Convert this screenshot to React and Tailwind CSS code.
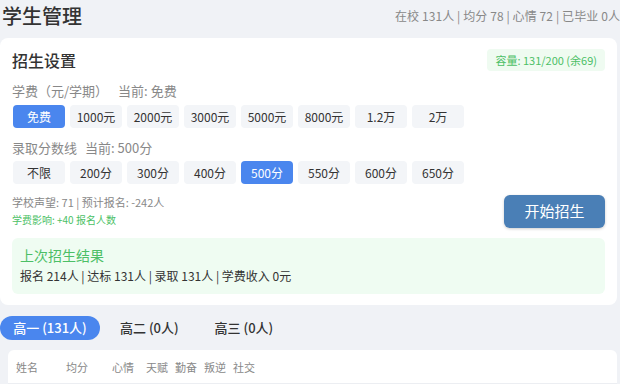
import React from "react";

const fees = ["免费", "1000元", "2000元", "3000元", "5000元", "8000元", "1.2万", "2万"];
const scores = ["不限", "200分", "300分", "400分", "500分", "550分", "600分", "650分"];

function Chip({ label, active }) {
  return (
    <div
      className={
        "w-[52px] h-[23px] flex items-center justify-center rounded-[4px] text-[12px] " +
        (active ? "bg-[#4a86ee] text-white" : "bg-[#f3f5f8] text-[#333]")
      }
    >
      {label}
    </div>
  );
}

export default function App() {
  return (
    <div
      className="w-[620px] h-[384px] overflow-hidden bg-[#f0f2f6] flex flex-col"
      style={{ fontFamily: '"Noto Sans CJK SC", "Noto Sans", sans-serif' }}
    >
      <div className="h-[38px] flex items-start justify-between pt-[2px]">
        <div className="pl-[2px] text-[20px] leading-[28px] font-medium text-[#333]">学生管理</div>
        <div className="whitespace-nowrap pt-[5px] text-[12px] text-[#888] tracking-[0.1px]">
          在校 131人 | 均分 78 | 心情 72 | 已毕业 0人
        </div>
      </div>

      <div className="mr-[3px] bg-white rounded-[8px] h-[267px] px-[12px] pt-[11px] flex flex-col">
        <div className="flex items-center justify-between">
          <div className="text-[16px] leading-[22px] font-medium text-[#333]">招生设置</div>
          <div className="h-[22px] px-[8px] flex items-center rounded-[4px] bg-[#effbf1] text-[11px] text-[#4cbf66]">
            容量: 131/200 (余69)
          </div>
        </div>

        <div className="mt-[11px] text-[13px] leading-[18px] text-[#888]">
          学费（元/学期）<span className="ml-[10px]">当前: 免费</span>
        </div>
        <div className="mt-[5px] flex gap-[5px] pl-[1px]">
          {fees.map((f, i) => (
            <Chip key={f} label={f} active={i === 0} />
          ))}
        </div>

        <div className="mt-[11px] text-[13px] leading-[18px] text-[#888]">
          录取分数线<span className="ml-[8px]">当前: 500分</span>
        </div>
        <div className="mt-[4px] flex gap-[5px] pl-[1px]">
          {scores.map((s) => (
            <Chip key={s} label={s} active={s === "500分"} />
          ))}
        </div>

        <div className="flex items-start justify-between mt-[10px]">
          <div className="flex flex-col">
            <div className="text-[11px] leading-[16px] text-[#888]">学校声望: 71 | 预计报名: -242人</div>
            <div className="mt-[3px] text-[10px] leading-[14px] text-[#4cbf66]">学费影响: +40 报名人数</div>
          </div>
          <div className="mt-[1px] w-[101px] h-[33px] flex items-center justify-center rounded-[6px] bg-[#4a7fb6] text-white text-[15px] shadow-[0_1px_3px_rgba(0,0,0,0.2)]">
            开始招生
          </div>
        </div>

        <div className="mt-[10px] h-[56px] rounded-[6px] bg-[#effcf2] px-[8px] pt-[7px]">
          <div className="text-[14px] leading-[20px] text-[#4cbf66]">上次招生结果</div>
          <div className="mt-[3px] text-[12px] leading-[16px] text-[#333]">
            报名 214人 | 达标 131人 | 录取 131人 | 学费收入 0元
          </div>
        </div>
      </div>

      <div className="mt-[11px] flex items-center h-[24px]">
        <div className="h-[24px] w-[100px] rounded-full bg-[#4a86ee] text-white text-[13px] font-medium flex items-center justify-center">
          高一 (131人)
        </div>
        <div className="ml-[20px] text-[13px] font-medium text-[#333]">高二 (0人)</div>
        <div className="ml-[36px] text-[13px] font-medium text-[#333]">高三 (0人)</div>
      </div>

      <div className="mt-[10px] ml-[8px] mr-[3px] bg-white rounded-t-[6px] flex-1">
        <div className="h-[34px] border-b border-[#eceef2] flex items-center text-[11px] text-[#888] pl-[8px] pt-[2px]">
          <span className="w-[50px]">姓名</span>
          <span className="w-[46px]">均分</span>
          <span className="w-[34px]">心情</span>
          <span className="w-[29px]">天赋</span>
          <span className="w-[29px]">勤奋</span>
          <span className="w-[29px]">叛逆</span>
          <span>社交</span>
        </div>
      </div>
    </div>
  );
}
